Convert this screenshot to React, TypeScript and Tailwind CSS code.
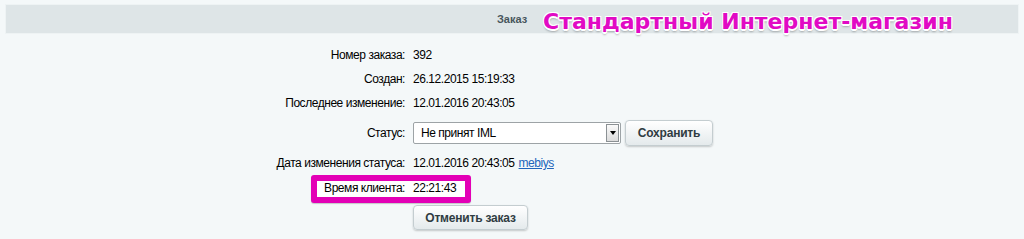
import React from "react";

const Row = ({ label, children, h }: { label: string; children: React.ReactNode; h: string }) => (
  <div className={`flex items-center ${h}`}>
    <div className="w-[405px] shrink-0 text-right">{label}</div>
    <div className="ml-2 flex items-center">{children}</div>
  </div>
);

export default function App() {
  return (
    <div className="relative h-[239px] w-[1024px] overflow-hidden bg-[#f4f8f9] pt-1 text-[12px] leading-[14px] tracking-[-0.45px] text-black [font-family:'Liberation_Sans',Arial,sans-serif]">
      <div className="mx-[5px] flex h-[30px] items-center justify-center border border-[#eef3f4] bg-[#dee5e7]">
        <span className="text-[11px] font-bold tracking-normal text-[#48565c]">Заказ</span>
      </div>
      <div className="absolute left-[543px] top-[7px] text-[22px] font-bold leading-[30px] tracking-normal text-[#e10ac4] [font-family:'DejaVu_Sans',Verdana,sans-serif] [text-shadow:0_0_1px_#fff,1px_1px_0_#fff,-1px_-1px_0_#fff,1px_-1px_0_#fff,-1px_1px_0_#fff,0_2px_0_#fff,0_3px_2px_rgba(0,0,0,0.25)]">
        Стандартный Интернет-магазин
      </div>

      <div className="pt-[9px]">
        <Row label="Номер заказа:" h="h-[24px]">392</Row>
        <Row label="Создан:" h="h-[24px]">26.12.2015 15:19:33</Row>
        <Row label="Последнее изменение:" h="h-[24px]">12.01.2016 20:43:05</Row>
        <Row label="Статус:" h="h-[36px]">
          <div className="flex h-[22px] w-[208px] items-center justify-between rounded-[2px] border border-[#9da3a6] bg-white pl-[7px] pr-[1px]">
            <span>Не принят IML</span>
            <div className="flex h-[18px] w-[13px] items-center justify-center border border-[#8b9194] bg-gradient-to-b from-[#fafafa] to-[#dcdcdc]">
              <div className="h-0 w-0 border-x-[3px] border-t-[4px] border-x-transparent border-t-black" />
            </div>
          </div>
          <button className="ml-[4px] flex h-[26px] w-[88px] items-center justify-center rounded-[4px] border border-[#c4cdd0] bg-gradient-to-b from-[#ffffff] to-[#e4eaec] text-[12px] font-bold tracking-[-0.2px] text-[#2f3c42] shadow-[0_1px_2px_rgba(0,0,0,0.2)]">
            Сохранить
          </button>
        </Row>
        <Row label="Дата изменения статуса:" h="h-[24px]">
          <span>12.01.2016 20:43:05</span>
          <a className="ml-1 text-[#2266bb] underline" href="#">mebiys</a>
        </Row>
        <div className="relative h-[28px]">
          <div className="absolute left-[311px] top-0 h-[28px] w-[160px] rounded-[3px] border-[6px] border-[#e300b6] bg-white shadow-[0_1px_1px_rgba(0,0,0,0.2)]" />
          <div className="relative flex h-[26px] items-center">
            <div className="w-[405px] shrink-0 text-right">Время клиента:</div>
            <div className="ml-2">22:21:43</div>
          </div>
        </div>
        <div className="flex h-[29px] items-center pl-[413px]">
          <button className="flex h-[25px] w-[115px] items-center justify-center rounded-[4px] border border-[#c4cdd0] bg-gradient-to-b from-[#ffffff] to-[#e4eaec] text-[12px] font-bold tracking-[-0.2px] text-[#2f3c42] shadow-[0_1px_2px_rgba(0,0,0,0.2)]">
            Отменить заказ
          </button>
        </div>
      </div>
    </div>
  );
}
